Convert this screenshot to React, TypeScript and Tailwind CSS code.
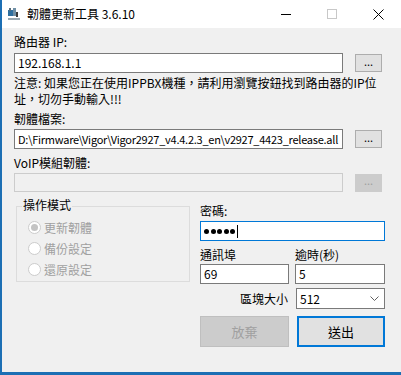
import React from "react";

const font = { fontFamily: '"Noto Sans CJK TC", "Noto Sans", sans-serif' };

function Btn({ disabled }: { disabled?: boolean }) {
  return (
    <div
      className={`w-[27px] h-[18px] flex items-center justify-center border text-[11px] leading-none ${
        disabled ? "border-[#cccccc] bg-[#cccccc] text-[#a0a0a0]" : "border-[#adadad] bg-[#e1e1e1] text-[#000]"
      }`}
    >
      <span className="-mt-[4px]">...</span>
    </div>
  );
}

function Radio({ checked, label }: { checked?: boolean; label: string }) {
  return (
    <div className="flex items-center h-[21px]">
      <div className="w-[13px] h-[13px] rounded-full border border-[#cccccc] bg-white flex items-center justify-center">
        {checked && <div className="w-[7px] h-[7px] rounded-full bg-[#c4c4c4]" />}
      </div>
      <span className="ml-[3px] text-[12px] text-[#a0a0a0]">{label}</span>
    </div>
  );
}

export default function App() {
  return (
    <div
      className="w-[401px] h-[375px] bg-[#f0f0f0] border-l-[2px] border-b-[3px] border-[#1c6fb4] flex flex-col text-black overflow-hidden"
      style={font}
    >
      {/* title bar */}
      <div className="h-[28px] bg-white flex items-center shrink-0">
        <svg width="16" height="16" viewBox="0 0 16 16" className="ml-[4px]">
          <rect x="2" y="4" width="6" height="6" fill="#2f6f9f" />
          <rect x="7" y="2" width="3" height="8" fill="#6f8fa5" />
          <rect x="3" y="2" width="2" height="3" fill="#5a6e7c" />
          <rect x="10" y="6" width="2" height="5" fill="#3a3a3a" />
          <rect x="2" y="12" width="12" height="2" fill="#9aa8b0" />
        </svg>
        <span className="ml-[5px] text-[12px] leading-none">韌體更新工具 3.6.10</span>
        <div className="ml-auto flex items-center h-full">
          <div className="w-[46px] h-full flex items-center justify-center">
            <div className="w-[10px] h-[1px] bg-black" />
          </div>
          <div className="w-[46px] h-full flex items-center justify-center">
            <div className="w-[10px] h-[10px] border border-[#c8c8c8]" />
          </div>
          <div className="w-[46px] h-full flex items-center justify-center">
            <svg width="11" height="11" viewBox="0 0 11 11">
              <path d="M0.5 0.5 L10.5 10.5 M10.5 0.5 L0.5 10.5" stroke="#000" strokeWidth="1" />
            </svg>
          </div>
        </div>
      </div>

      {/* body */}
      <div className="flex flex-col pl-[12px] pr-[16px] pt-[6px] text-[12px] leading-[16px]">
        <div>路由器 IP:</div>
        <div className="flex items-center mt-[3px]">
          <div className="w-[329px] h-[20px] border border-[#7a7a7a] bg-white px-[3px] flex items-center">192.168.1.1</div>
          <div className="ml-[12px]"><Btn /></div>
        </div>
        <div className="mt-[2px] leading-[16px] whitespace-nowrap">
          注意: 如果您正在使用IPPBX機種，請利用瀏覽按鈕找到路由器的IP位
          <br />
          址，切勿手動輸入!!!
        </div>
        <div className="mt-[4px]">韌體檔案:</div>
        <div className="flex items-center mt-[2px]">
          <div className="w-[329px] h-[20px] border border-[#7a7a7a] bg-white pl-[3px] flex items-center whitespace-nowrap overflow-hidden">
            <span className="text-[11px] tracking-[-0.25px]">D:\Firmware\Vigor\Vigor2927_v4.4.2.3_en\v2927_4423_release.all</span>
          </div>
          <div className="ml-[12px]"><Btn /></div>
        </div>
        <div className="mt-[6px]">VoIP模組韌體:</div>
        <div className="flex items-center mt-[2px]">
          <div className="w-[329px] h-[19px] border border-[#cccccc] bg-[#f0f0f0]" />
          <div className="ml-[12px]"><Btn disabled /></div>
        </div>

        <div className="flex mt-[7px]">
          {/* group box */}
          <div className="relative w-[176px] h-[76px] mt-[7px] ml-[2px] border border-[#dcdcdc] self-start">
            <div className="absolute -top-[10px] left-[5px] px-[1px] bg-[#f0f0f0] leading-[16px]">操作模式</div>
            <div className="flex flex-col pt-[10px] pl-[11px]">
              <Radio checked label="更新韌體" />
              <Radio label="備份設定" />
              <Radio label="還原設定" />
            </div>
          </div>

          {/* right side */}
          <div className="ml-[10px] flex flex-col w-[186px] pt-[4px]">
            <div>密碼:</div>
            <div className="mt-[2px] h-[20px] border border-[#0078d7] bg-white flex items-center pl-[3px]">
              <div className="flex gap-[1.5px]">
                <div className="w-[5px] h-[5px] rounded-full bg-black" />
                <div className="w-[5px] h-[5px] rounded-full bg-black" />
                <div className="w-[5px] h-[5px] rounded-full bg-black" />
                <div className="w-[5px] h-[5px] rounded-full bg-black" />
                <div className="w-[5px] h-[5px] rounded-full bg-black" />
              </div>
              <div className="w-[1px] h-[13px] bg-black ml-[2px]" />
            </div>
            <div className="flex mt-[6px]">
              <div className="flex flex-col w-[89px]">
                <div>通訊埠</div>
                <div className="mt-[1px] h-[20px] border border-[#7a7a7a] bg-white flex items-center px-[3px]">69</div>
              </div>
              <div className="flex flex-col w-[90px] ml-[6px]">
                <div>逾時(秒)</div>
                <div className="mt-[1px] h-[20px] border border-[#7a7a7a] bg-white flex items-center px-[3px]">5</div>
              </div>
            </div>
            <div className="flex items-center mt-[4px]">
              <div className="w-[89px] text-right pr-[1px]">區塊大小</div>
              <div className="ml-[7px] w-[89px] h-[21px] border border-[#7a7a7a] bg-white flex items-center px-[3px]">
                <span>512</span>
                <svg width="9" height="6" viewBox="0 0 9 6" className="ml-auto mr-[2px]">
                  <path d="M0.5 0.5 L4.5 4.5 L8.5 0.5" fill="none" stroke="#606060" strokeWidth="1" />
                </svg>
              </div>
            </div>
            <div className="flex mt-[7px]">
              <div className="w-[89px] h-[31px] border border-[#bfbfbf] bg-[#cccccc] text-[#a0a0a0] flex items-center justify-center text-[13px]">放棄</div>
              <div className="ml-[8px] w-[88px] h-[31px] border-[2px] border-[#0078d7] bg-[#e1e1e1] flex items-center justify-center text-[13px]">送出</div>
            </div>
          </div>
        </div>
      </div>
    </div>
  );
}
